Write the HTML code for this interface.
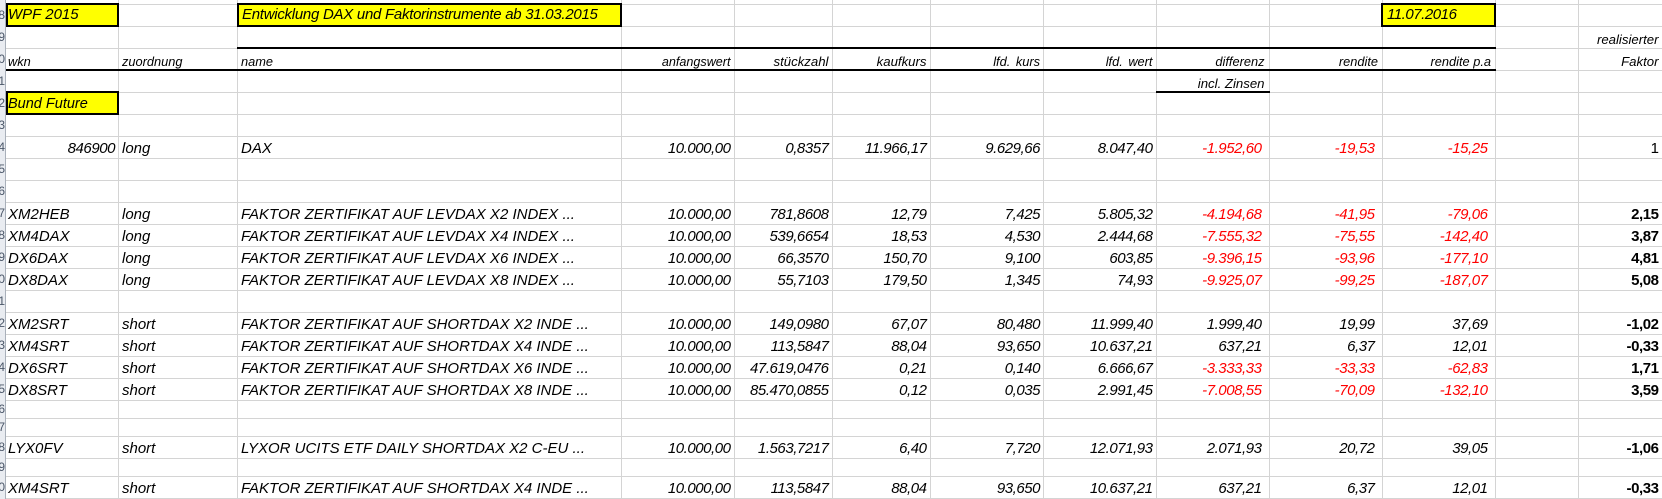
<!DOCTYPE html>
<html><head><meta charset="utf-8"><style>
html,body{margin:0;padding:0;background:#fff}
#p{position:relative;width:1662px;height:499px;overflow:hidden;background:#fff;font:italic 15px "Liberation Sans",Arial,sans-serif;color:#000}
.h,.v,.b,.y{position:absolute}
.h{left:0;width:1662px;height:1px;background:#d4d4d4}
.v{top:0;height:499px;width:1px;background:#d4d4d4}
.b{background:#000}
.y{background:#ff0;border:2px solid #000;box-sizing:border-box}
.r{position:absolute;left:0;width:1662px;height:22px;line-height:22px}
.r span{position:absolute;top:1.5px;white-space:pre}
.r span.t{top:0}
.a{left:8px}.z{left:122px}.n{left:241px}
.c1{right:931.5px}.c2{right:833.5px}.c3{right:735.5px}.c4{right:622px}.c5{right:509.5px}
.c6{right:400.5px}.c7{right:287.5px}.c8{right:174.5px}.c9{right:3.5px}
.c1,.c2,.c3,.c4,.c5,.c6,.c7,.c8,.c9,.m{letter-spacing:-.45px}
.r.s span{font-size:12.8px;top:2.5px;letter-spacing:0}
.s .c1{font-size:12.6px!important}
.s .c2,.s .c3{font-size:13.2px!important}
.s .c4,.s .c5{word-spacing:2px}
.s .c9{font-size:13.2px!important}
.s .c6{right:397.5px}.s .c7{right:284px}.s .c8{right:171px}
.red{color:#f00}
.r span.f{font-style:normal;font-weight:bold}
.r span.o{font-style:normal}
#rh{position:absolute;left:0;top:0;width:5px;height:499px;overflow:hidden;background:#e9ecf1;border-right:1px solid #a9b0ba}
#rh div{position:absolute;right:0;font:12px "Liberation Sans",sans-serif;color:#4a5668;line-height:16px;border-bottom:0}
</style></head><body><div id="p">
<div class="h" style="top:4px"></div><div class="h" style="top:26px"></div><div class="h" style="top:48px"></div><div class="h" style="top:70px"></div><div class="h" style="top:92px"></div><div class="h" style="top:114px"></div><div class="h" style="top:136px"></div><div class="h" style="top:158px"></div><div class="h" style="top:180px"></div><div class="h" style="top:202px"></div><div class="h" style="top:224px"></div><div class="h" style="top:246px"></div><div class="h" style="top:268px"></div><div class="h" style="top:290px"></div><div class="h" style="top:312px"></div><div class="h" style="top:334px"></div><div class="h" style="top:356px"></div><div class="h" style="top:378px"></div><div class="h" style="top:400px"></div><div class="h" style="top:418px"></div><div class="h" style="top:436px"></div><div class="h" style="top:458px"></div><div class="h" style="top:476px"></div><div class="h" style="top:498px"></div>
<div class="v" style="left:118px"></div><div class="v" style="left:237px"></div><div class="v" style="left:621px"></div><div class="v" style="left:734px"></div><div class="v" style="left:832px"></div><div class="v" style="left:930px"></div><div class="v" style="left:1043px"></div><div class="v" style="left:1156px"></div><div class="v" style="left:1269px"></div><div class="v" style="left:1382px"></div><div class="v" style="left:1495px"></div><div class="v" style="left:1578px"></div>
<div id="rh">
<div style="top:7px">8</div><div style="top:29px">9</div><div style="top:51px">10</div><div style="top:73px">11</div><div style="top:95px">12</div><div style="top:117px">13</div><div style="top:139px">14</div><div style="top:161px">15</div><div style="top:183px">16</div><div style="top:205px">17</div><div style="top:227px">18</div><div style="top:249px">19</div><div style="top:271px">20</div><div style="top:293px">21</div><div style="top:315px">22</div><div style="top:337px">23</div><div style="top:359px">24</div><div style="top:381px">25</div><div style="top:401px">26</div><div style="top:419px">27</div><div style="top:439px">28</div><div style="top:459px">29</div><div style="top:479px">30</div>
</div>
<div class="b" style="left:237px;top:47px;width:1259px;height:2px"></div>
<div class="b" style="left:6px;top:69px;width:1490px;height:2px"></div>
<div class="b" style="left:1156px;top:91px;width:114px;height:2px"></div>
<div class="y" style="left:6px;top:3px;width:113px;height:24px"></div>
<div class="y" style="left:237px;top:3px;width:385px;height:24px"></div>
<div class="y" style="left:1381px;top:3px;width:115px;height:24px"></div>
<div class="y" style="left:6px;top:91px;width:113px;height:24px"></div>

<div class="r" style="top:4px"><span class="a t">WPF 2015</span><span class="t" style="left:242px;letter-spacing:-.27px">Entwicklung DAX und Faktorinstrumente ab 31.03.2015</span><span class="t m" style="left:1387px">11.07.2016</span></div>
<div class="r s" style="top:26px"><span class="c9">realisierter</span></div>
<div class="r s" style="top:48px"><span class="a">wkn</span><span class="z">zuordnung</span><span class="n">name</span><span class="c1">anfangswert</span><span class="c2">stückzahl</span><span class="c3">kaufkurs</span><span class="c4">lfd. kurs</span><span class="c5">lfd. wert</span><span class="c6">differenz</span><span class="c7">rendite</span><span class="c8">rendite p.a</span><span class="c9">Faktor</span></div>
<div class="r s" style="top:70px"><span class="c6" style="font-size:13.2px">incl. Zinsen</span></div>
<div class="r" style="top:92px"><span class="a t" style="font-size:14.5px;top:1px">Bund Future</span></div>

<div class="r" style="top:136px"><span class="m" style="right:1547px">846900</span><span class="z">long</span><span class="n">DAX</span><span class="c1">10.000,00</span><span class="c2">0,8357</span><span class="c3">11.966,17</span><span class="c4">9.629,66</span><span class="c5">8.047,40</span><span class="c6 red">-1.952,60</span><span class="c7 red">-19,53</span><span class="c8 red">-15,25</span><span class="c9 o">1</span></div>

<div class="r" style="top:202px"><span class="a">XM2HEB</span><span class="z">long</span><span class="n">FAKTOR ZERTIFIKAT AUF LEVDAX X2 INDEX ...</span><span class="c1">10.000,00</span><span class="c2">781,8608</span><span class="c3">12,79</span><span class="c4">7,425</span><span class="c5">5.805,32</span><span class="c6 red">-4.194,68</span><span class="c7 red">-41,95</span><span class="c8 red">-79,06</span><span class="c9 f">2,15</span></div>
<div class="r" style="top:224px"><span class="a">XM4DAX</span><span class="z">long</span><span class="n">FAKTOR ZERTIFIKAT AUF LEVDAX X4 INDEX ...</span><span class="c1">10.000,00</span><span class="c2">539,6654</span><span class="c3">18,53</span><span class="c4">4,530</span><span class="c5">2.444,68</span><span class="c6 red">-7.555,32</span><span class="c7 red">-75,55</span><span class="c8 red">-142,40</span><span class="c9 f">3,87</span></div>
<div class="r" style="top:246px"><span class="a">DX6DAX</span><span class="z">long</span><span class="n">FAKTOR ZERTIFIKAT AUF LEVDAX X6 INDEX ...</span><span class="c1">10.000,00</span><span class="c2">66,3570</span><span class="c3">150,70</span><span class="c4">9,100</span><span class="c5">603,85</span><span class="c6 red">-9.396,15</span><span class="c7 red">-93,96</span><span class="c8 red">-177,10</span><span class="c9 f">4,81</span></div>
<div class="r" style="top:268px"><span class="a">DX8DAX</span><span class="z">long</span><span class="n">FAKTOR ZERTIFIKAT AUF LEVDAX X8 INDEX ...</span><span class="c1">10.000,00</span><span class="c2">55,7103</span><span class="c3">179,50</span><span class="c4">1,345</span><span class="c5">74,93</span><span class="c6 red">-9.925,07</span><span class="c7 red">-99,25</span><span class="c8 red">-187,07</span><span class="c9 f">5,08</span></div>

<div class="r" style="top:312px"><span class="a">XM2SRT</span><span class="z">short</span><span class="n">FAKTOR ZERTIFIKAT AUF SHORTDAX X2 INDE ...</span><span class="c1">10.000,00</span><span class="c2">149,0980</span><span class="c3">67,07</span><span class="c4">80,480</span><span class="c5">11.999,40</span><span class="c6">1.999,40</span><span class="c7">19,99</span><span class="c8">37,69</span><span class="c9 f">-1,02</span></div>
<div class="r" style="top:334px"><span class="a">XM4SRT</span><span class="z">short</span><span class="n">FAKTOR ZERTIFIKAT AUF SHORTDAX X4 INDE ...</span><span class="c1">10.000,00</span><span class="c2">113,5847</span><span class="c3">88,04</span><span class="c4">93,650</span><span class="c5">10.637,21</span><span class="c6">637,21</span><span class="c7">6,37</span><span class="c8">12,01</span><span class="c9 f">-0,33</span></div>
<div class="r" style="top:356px"><span class="a">DX6SRT</span><span class="z">short</span><span class="n">FAKTOR ZERTIFIKAT AUF SHORTDAX X6 INDE ...</span><span class="c1">10.000,00</span><span class="c2">47.619,0476</span><span class="c3">0,21</span><span class="c4">0,140</span><span class="c5">6.666,67</span><span class="c6 red">-3.333,33</span><span class="c7 red">-33,33</span><span class="c8 red">-62,83</span><span class="c9 f">1,71</span></div>
<div class="r" style="top:378px"><span class="a">DX8SRT</span><span class="z">short</span><span class="n">FAKTOR ZERTIFIKAT AUF SHORTDAX X8 INDE ...</span><span class="c1">10.000,00</span><span class="c2">85.470,0855</span><span class="c3">0,12</span><span class="c4">0,035</span><span class="c5">2.991,45</span><span class="c6 red">-7.008,55</span><span class="c7 red">-70,09</span><span class="c8 red">-132,10</span><span class="c9 f">3,59</span></div>

<div class="r" style="top:436px"><span class="a">LYX0FV</span><span class="z">short</span><span class="n">LYXOR UCITS ETF DAILY SHORTDAX X2 C-EU ...</span><span class="c1">10.000,00</span><span class="c2">1.563,7217</span><span class="c3">6,40</span><span class="c4">7,720</span><span class="c5">12.071,93</span><span class="c6">2.071,93</span><span class="c7">20,72</span><span class="c8">39,05</span><span class="c9 f">-1,06</span></div>
<div class="r" style="top:476px"><span class="a">XM4SRT</span><span class="z">short</span><span class="n">FAKTOR ZERTIFIKAT AUF SHORTDAX X4 INDE ...</span><span class="c1">10.000,00</span><span class="c2">113,5847</span><span class="c3">88,04</span><span class="c4">93,650</span><span class="c5">10.637,21</span><span class="c6">637,21</span><span class="c7">6,37</span><span class="c8">12,01</span><span class="c9 f">-0,33</span></div>
</div></body></html>
